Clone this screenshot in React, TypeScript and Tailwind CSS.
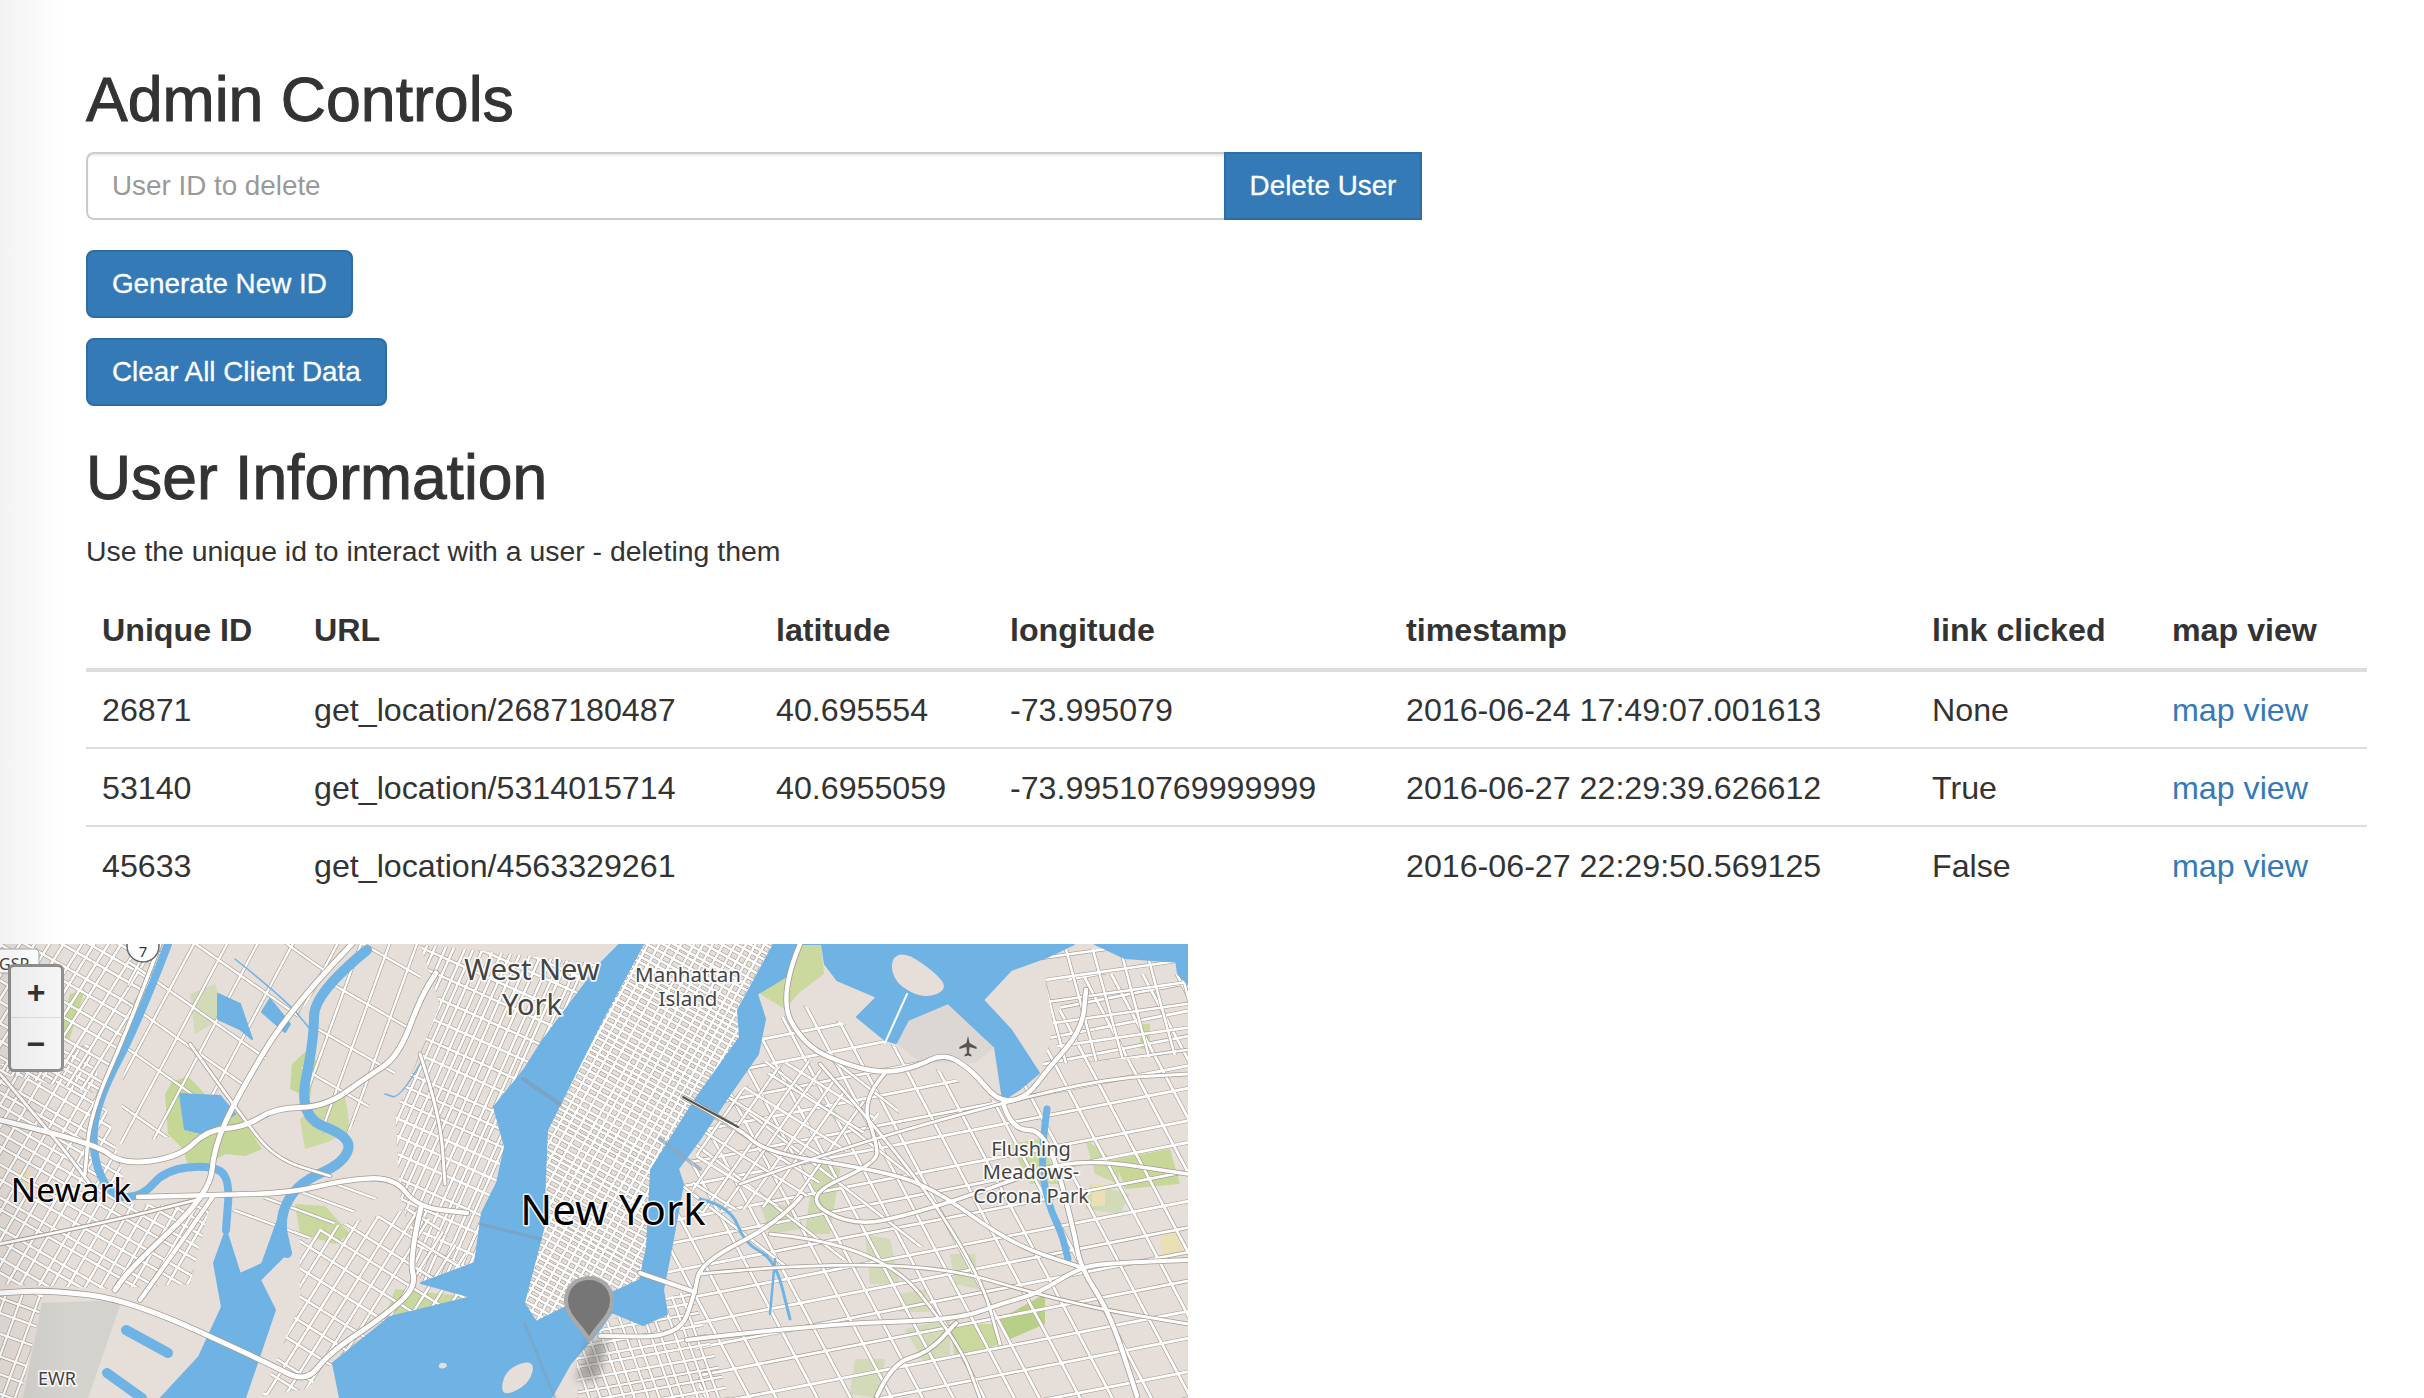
type Pt = [number, number];

// smooth a list of points into a path through the midpoints
function smooth(pts: Pt[], closed = false) {
  if (pts.length < 3) return "M" + pts.map((p) => p.join(" ")).join("L");
  const mid = (a: Pt, b: Pt): Pt => [(a[0] + b[0]) / 2, (a[1] + b[1]) / 2];
  if (closed) {
    const first = mid(pts[pts.length - 1], pts[0]);
    let d = `M${first[0]} ${first[1]}`;
    pts.forEach((p, i) => {
      const m = mid(p, pts[(i + 1) % pts.length]);
      d += `Q${p[0]} ${p[1]} ${m[0]} ${m[1]}`;
    });
    return d + "Z";
  }
  let d = `M${pts[0][0]} ${pts[0][1]}`;
  for (let i = 1; i < pts.length - 1; i++) {
    const m = mid(pts[i], pts[i + 1]);
    d += `Q${pts[i][0]} ${pts[i][1]} ${m[0]} ${m[1]}`;
  }
  const last = pts[pts.length - 1];
  return d + `L${last[0]} ${last[1]}`;
}

const poly = (pts: Pt[]) => pts.map((p) => p.join(",")).join(" ");

// little seeded random so the street grids come out the same each run
function rng(seed: number) {
  let s = seed;
  return () => {
    s = (s * 16807) % 2147483647;
    return s / 2147483647;
  };
}

function grid(box: number[], angle: number, gap: number, seed: number, jitter = 0.25) {
  const [x0, y0, x1, y1] = box;
  const cx = (x0 + x1) / 2;
  const cy = (y0 + y1) / 2;
  const r = Math.hypot(x1 - x0, y1 - y0) / 2 + 10;
  const a = (angle * Math.PI) / 180;
  const dx = Math.cos(a);
  const dy = Math.sin(a);
  const rand = rng(seed);
  let d = "";
  for (let o = -r; o <= r; o += gap * (1 - jitter + rand() * jitter * 2)) {
    const px = cx - dy * o;
    const py = cy + dx * o;
    const bend = (rand() - 0.5) * jitter * 8;
    d += `M${(px - dx * r).toFixed(1)} ${(py - dy * r).toFixed(1)}L${(px + dx * r + bend).toFixed(1)} ${(py + dy * r - bend).toFixed(1)}`;
  }
  return d;
}

type District = { id: string; clip: Pt[]; lines: { angle: number; gap: number }[]; width: number };

const manhattanShape: Pt[] = [[643, 0], [600, 80], [547, 186], [543, 286], [524, 359], [536, 378], [566, 363], [612, 349], [640, 336], [647, 303], [651, 226], [695, 156], [740, 93], [738, 66], [774, 3], [774, 0]];

const districts: District[] = [
  { id: "manhattan", clip: manhattanShape, lines: [{ angle: -61, gap: 10 }, { angle: 29, gap: 6.5 }], width: 2.6 },
  { id: "hudson", clip: [[420, 0], [600, 20], [543, 96], [524, 126], [494, 163], [505, 203], [497, 239], [482, 269], [475, 319], [421, 339], [400, 250], [395, 170], [440, 60]], lines: [{ angle: -66, gap: 9 }, { angle: 24, gap: 18 }], width: 2.6 },
  { id: "bayonne", clip: [[300, 290], [417, 263], [475, 319], [472, 353], [390, 373], [333, 419], [306, 445], [262, 452], [300, 360]], lines: [{ angle: -58, gap: 15 }, { angle: 32, gap: 20 }], width: 2.6 },
  { id: "newark", clip: [[0, 120], [90, 100], [130, 260], [210, 262], [190, 340], [110, 345], [0, 340]], lines: [{ angle: -60, gap: 14 }, { angle: 30, gap: 13 }], width: 2.6 },
  { id: "nnj", clip: [[0, 0], [168, 0], [100, 150], [0, 130]], lines: [{ angle: -58, gap: 13 }, { angle: 30, gap: 15 }], width: 2.6 },
  { id: "nnj2", clip: [[130, 0], [350, 0], [240, 150], [190, 190], [120, 200]], lines: [{ angle: -62, gap: 36 }, { angle: 35, gap: 44 }], width: 2.4 },
  { id: "meadow", clip: [[350, 0], [430, 0], [395, 130], [330, 210], [300, 130]], lines: [{ angle: -70, gap: 34 }, { angle: 30, gap: 50 }], width: 2.4 },
  { id: "kearny", clip: [[225, 270], [300, 240], [400, 240], [300, 300]], lines: [{ angle: 20, gap: 24 }], width: 2.4 },
  { id: "ewrside", clip: [[0, 345], [45, 345], [20, 454], [0, 454]], lines: [{ angle: -70, gap: 14 }, { angle: 20, gap: 18 }], width: 2.4 },
  { id: "queens", clip: [[745, 100], [800, 60], [890, 100], [1000, 160], [1040, 130], [1070, 30], [1188, 30], [1188, 454], [700, 454], [690, 350], [660, 340], [680, 240]], lines: [{ angle: -11, gap: 27 }, { angle: 62, gap: 30 }], width: 2.8 },
  { id: "queens2", clip: [[720, 120], [880, 110], [940, 300], [760, 330], [680, 250]], lines: [{ angle: 38, gap: 48 }], width: 2.6 },
  { id: "brooklyn", clip: [[575, 390], [690, 345], [730, 454], [578, 454]], lines: [{ angle: -10, gap: 11 }, { angle: 70, gap: 12 }], width: 2.4 },
  { id: "lic", clip: [[700, 170], [800, 110], [880, 170], [800, 260], [690, 270]], lines: [{ angle: -55, gap: 18 }, { angle: 32, gap: 20 }], width: 2.6 },
  { id: "northeast", clip: [[1040, 5], [1188, 5], [1188, 110], [1060, 120]], lines: [{ angle: -8, gap: 20 }, { angle: 75, gap: 24 }], width: 2.6 },
];

const highways: { pts: Pt[]; w: number }[] = [
  { pts: [[352, 0], [291, 63], [237, 153], [214, 203], [210, 249], [130, 325], [115, 346]], w: 5 },
  { pts: [[0, 176], [96, 199], [122, 221], [180, 213], [207, 186], [245, 183], [275, 164], [325, 163], [367, 133], [398, 113], [421, 53], [436, 29]], w: 5 },
  { pts: [[138, 253], [214, 251], [291, 249], [344, 236], [394, 233], [417, 263], [467, 269]], w: 4.5 },
  { pts: [[421, 263], [409, 316], [417, 343], [383, 373], [329, 409], [306, 439], [268, 419], [130, 356], [50, 346], [0, 349]], w: 5 },
  { pts: [[214, 251], [180, 300], [140, 356]], w: 4 },
  { pts: [[0, 130], [60, 200], [90, 240]], w: 3 },
  { pts: [[160, 0], [130, 80], [90, 170], [85, 230]], w: 3.5 },
  { pts: [[190, 100], [240, 170], [275, 215], [330, 232]], w: 2.8 },
  { pts: [[420, 110], [440, 170], [445, 240]], w: 3 },
  { pts: [[0, 300], [100, 280], [200, 255]], w: 2.8 },
  { pts: [[800, 0], [778, 53], [805, 103], [853, 123], [885, 129], [916, 123], [944, 109], [972, 126], [999, 159], [1027, 153], [1047, 126], [1082, 86], [1086, 46]], w: 4.5 },
  { pts: [[683, 153], [738, 183], [766, 209], [877, 226], [932, 243], [1011, 300], [1080, 323]], w: 3.5 },
  { pts: [[1003, 159], [1011, 186], [1047, 186], [1074, 286], [1080, 323], [1110, 369], [1137, 452]], w: 4.5 },
  { pts: [[885, 129], [861, 156], [877, 199], [877, 219], [801, 253], [853, 283], [916, 269], [995, 243], [1074, 213], [1188, 230]], w: 3.5 },
  { pts: [[801, 253], [778, 279], [700, 319], [695, 349], [679, 393], [600, 392]], w: 4 },
  { pts: [[640, 329], [695, 348]], w: 4 },
  { pts: [[687, 396], [820, 380], [956, 376], [1003, 359], [1039, 349], [1080, 323], [1114, 319], [1188, 316]], w: 4 },
  { pts: [[877, 452], [892, 419], [928, 409], [956, 379]], w: 4 },
  { pts: [[740, 240], [830, 208], [960, 170], [1100, 135], [1188, 130]], w: 2.8 },
  { pts: [[700, 330], [900, 310], [1070, 360], [1188, 380]], w: 2.8 },
  { pts: [[770, 290], [880, 300], [960, 400], [980, 454]], w: 2.8 },
  { pts: [[820, 120], [905, 215], [980, 330], [1000, 400]], w: 2.8 },
];

const parks: { pts: Pt[]; c: string }[] = [
  { pts: [[165, 150], [172, 138], [188, 132], [205, 150], [240, 170], [252, 190], [262, 205], [245, 212], [225, 210], [205, 222], [190, 228], [183, 205], [168, 190]], c: "#c4d797" },
  { pts: [[300, 175], [322, 158], [345, 150], [350, 186], [328, 198], [305, 205]], c: "#ccd9a2" },
  { pts: [[292, 120], [305, 108], [320, 120], [312, 140], [310, 155], [290, 145]], c: "#c4d797" },
  { pts: [[190, 50], [215, 40], [222, 62], [230, 70], [208, 82], [195, 90]], c: "#d2dab8" },
  { pts: [[295, 260], [325, 262], [350, 290], [335, 300], [300, 290]], c: "#c9d89d" },
  { pts: [[395, 345], [472, 353], [455, 372], [430, 385], [405, 400], [385, 375]], c: "#c9d89d" },
  { pts: [[70, 50], [85, 45], [68, 100], [58, 90]], c: "#c4d797" },
  { pts: [[340, 410], [375, 385], [385, 395], [345, 430]], c: "#c9d89d" },
  { pts: [[786, 0], [821, 0], [824, 30], [800, 48], [785, 65], [760, 50], [770, 20]], c: "#cbd99f" },
  { pts: [[815, 215], [840, 225], [830, 290], [805, 290]], c: "#ced8ae" },
  { pts: [[760, 260], [790, 262], [800, 285], [770, 290]], c: "#cfd8b4" },
  { pts: [[1010, 200], [1040, 195], [1060, 240], [1030, 240]], c: "#cbd9a2" },
  { pts: [[1085, 195], [1120, 220], [1118, 240], [1095, 230]], c: "#cbd9a2" },
  { pts: [[1115, 215], [1170, 205], [1180, 240], [1125, 245]], c: "#c7d798" },
  { pts: [[1090, 240], [1130, 250], [1120, 270], [1085, 265]], c: "#d2dab8" },
  { pts: [[1000, 375], [1045, 350], [1045, 380], [1010, 395]], c: "#b9cf87" },
  { pts: [[950, 380], [995, 380], [1000, 400], [955, 415]], c: "#c9d89d" },
  { pts: [[905, 385], [950, 375], [950, 410], [925, 420]], c: "#d2dab8" },
  { pts: [[855, 415], [885, 415], [880, 454], [850, 450]], c: "#d2dab8" },
  { pts: [[865, 290], [890, 295], [900, 340], [870, 340]], c: "#d2dab8" },
  { pts: [[950, 310], [975, 310], [978, 345], [955, 340]], c: "#d2dab8" },
  { pts: [[900, 350], [925, 345], [930, 368], [900, 368]], c: "#d2dab8" },
  { pts: [[1092, 240], [1105, 240], [1105, 262], [1092, 262]], c: "#eadfb5" },
  { pts: [[1160, 290], [1180, 285], [1183, 312], [1162, 315]], c: "#eadfb5" },
  { pts: [[1140, 80], [1150, 80], [1150, 105], [1140, 105]], c: "#c9d89d" },
  { pts: [[20, 225], [30, 225], [32, 245], [18, 245]], c: "#eadfb5" },
];

const waterAreas: Pt[][] = [
  // hudson, upper bay and east river
  [[620, 0], [600, 20], [543, 96], [524, 126], [494, 163], [505, 203], [497, 239], [482, 269], [475, 319], [421, 339], [472, 353], [390, 373], [333, 419], [340, 454], [551, 454], [570, 420], [600, 385], [612, 368], [643, 381], [667, 370], [663, 346], [672, 300], [683, 240], [678, 225], [700, 195], [730, 150], [758, 110], [765, 75], [757, 50], [790, 30], [800, 0], [774, 0], [738, 66], [740, 93], [695, 156], [651, 226], [647, 303], [640, 336], [612, 349], [566, 363], [536, 378], [524, 359], [543, 286], [547, 186], [600, 80], [643, 0]],
  // north of queens
  [[800, 0], [1074, 0], [1047, 13], [1011, 26], [983, 56], [1011, 86], [1039, 129], [1020, 145], [1003, 156], [995, 103], [948, 59], [908, 76], [896, 99], [885, 96], [857, 73], [877, 53], [837, 36], [825, 20], [822, 0]],
  // newark bay
  [[226, 286], [214, 319], [222, 363], [199, 413], [161, 454], [245, 454], [275, 366], [260, 336], [287, 309], [279, 273], [262, 320], [240, 330]],
  // meadowlands pond
  [[180, 150], [220, 152], [235, 170], [205, 190], [185, 185]],
  [[218, 50], [240, 60], [252, 95], [240, 85], [218, 75]],
  [[270, 55], [290, 80], [285, 88], [262, 68]],
  // top right corner
  [[1095, 0], [1188, 0], [1180, 18], [1125, 14]],
  [[1174, 0], [1188, 0], [1188, 40], [1178, 30]],
];

const landInWater: Pt[][] = [
  // rikers
  [[890, 15], [905, 8], [935, 28], [948, 45], [925, 55], [895, 40]],
  // liberty bay bits
  [[505, 425], [535, 415], [530, 440], [500, 454]],
  [[440, 418], [448, 420], [445, 425], [438, 424]],
];

const rivers: { pts: Pt[]; w: number }[] = [
  { pts: [[168, 0], [138, 79], [96, 159], [92, 213], [111, 253], [142, 253], [165, 226], [210, 221], [230, 233], [226, 286]], w: 8 },
  { pts: [[367, 6], [314, 49], [314, 96], [298, 173], [352, 193], [344, 219], [298, 239], [279, 273], [287, 309]], w: 10 },
  { pts: [[420, 120], [400, 155], [385, 150]], w: 1.5 },
  { pts: [[235, 15], [285, 55], [310, 85]], w: 1.5 },
  { pts: [[700, 255], [730, 262], [745, 300], [775, 315], [790, 375]], w: 3 },
  { pts: [[775, 315], [770, 370]], w: 2.5 },
  { pts: [[1047, 165], [1040, 215], [1048, 260], [1062, 290], [1068, 315]], w: 7 },
  { pts: [[126, 386], [168, 409]], w: 10 },
  { pts: [[107, 429], [142, 454]], w: 10 },
];

const streetClips = districts.map((d) => ({
  ...d,
  paths: d.lines.map((l, i) => {
    const xs = d.clip.map((p) => p[0]);
    const ys = d.clip.map((p) => p[1]);
    return grid([Math.min(...xs), Math.min(...ys), Math.max(...xs), Math.max(...ys)], l.angle, l.gap, 97 + i * 31 + d.id.length * 17);
  }),
}));

const road = "#a49c92";

function Label({ x, y, size, children, black }: { x: number; y: number; size: number; children: string; black?: boolean }) {
  return (
    <text
      x={x}
      y={y}
      fontSize={size}
      textAnchor="middle"
      fontFamily="'Noto Sans', 'Open Sans', sans-serif"
      fill={black ? "#000" : "#444"}
      stroke="#fff"
      strokeOpacity={0.85}
      strokeWidth={black ? 3 : 3.5}
      paintOrder="stroke"
      strokeLinejoin="round"
    >
      {children}
    </text>
  );
}

function CityMap() {
  return (
    <svg viewBox="0 0 1188 454" className="block h-[454px] w-[1188px] bg-[#e6ded8]">
      <defs>
        {streetClips.map((d) => (
          <clipPath key={d.id} id={"clip-" + d.id}>
            <polygon points={poly(d.clip)} />
          </clipPath>
        ))}
        <filter id="pin-shadow" x="-50%" y="-50%" width="200%" height="200%">
          <feGaussianBlur stdDeviation="4" />
        </filter>
      </defs>

      {parks.map((p, i) => (
        <polygon key={i} points={poly(p.pts)} fill={p.c} />
      ))}
      <polygon points={poly([[896, 99], [908, 76], [948, 59], [995, 103], [975, 119], [920, 118]])} fill="#dcd7d3" />
      <polygon points={poly([[42, 359], [122, 356], [88, 454], [23, 454]])} fill="#d4d2cd" />

      {streetClips.map((d) => (
        <g key={d.id} clipPath={`url(#clip-${d.id})`} fill="none">
          {d.paths.map((p, i) => (
            <path key={i} d={p} stroke={road} strokeWidth={d.width + 1.2} />
          ))}
          {d.paths.map((p, i) => (
            <path key={i} d={p} stroke="#fff" strokeWidth={d.width} />
          ))}
        </g>
      ))}

      {/* the big water bodies keep their corners, smoothing rounds the shores off too far */}
      {waterAreas.map((w, i) => (
        <polygon key={i} points={poly(w)} fill="#6fb2e4" strokeLinejoin="round" stroke="#6fb2e4" strokeWidth="2" />
      ))}
      {landInWater.map((w, i) => (
        <path key={i} d={smooth(w, true)} fill="#e6ded8" />
      ))}
      {rivers.map((r, i) => (
        <path key={i} d={smooth(r.pts)} fill="none" stroke="#6fb2e4" strokeWidth={r.w} strokeLinecap="round" />
      ))}

      <g fill="none" strokeLinecap="round" strokeLinejoin="round">
        {highways.map((h, i) => (
          <path key={i} d={smooth(h.pts)} stroke={road} strokeWidth={h.w + 1.6} />
        ))}
        {highways.map((h, i) => (
          <path key={i} d={smooth(h.pts)} stroke="#fff" strokeWidth={h.w} />
        ))}
        {/* tunnels and bridges over the rivers */}
        <path d="M683 153L738 183" stroke="#555" strokeWidth="2" />
        <path d="M660 195L700 225" stroke="#8fa7bb" strokeWidth="4" opacity="0.7" />
        <path d="M523 135L560 160" stroke="#7f9db6" strokeWidth="4" opacity="0.7" />
        <path d="M480 280L540 295" stroke="#7f9db6" strokeWidth="3" opacity="0.7" />
        <path d="M525 380Q545 430 555 454" stroke="#7f9db6" strokeWidth="3" opacity="0.5" />
        <path d="M885 99L907 50" stroke="#fff" strokeWidth="2" />
      </g>

      {/* route shields */}
      <rect x="-8" y="5" width="47" height="24" rx="4" fill="#fff" stroke="#aaa" />
      <text x="-1" y="26" fontSize="16" fill="#444" fontFamily="'Noto Sans', sans-serif">GSP</text>
      <ellipse cx="143" cy="2" rx="16" ry="16" fill="#fff" stroke="#666" strokeWidth="1.5" />
      <text x="143" y="13" fontSize="15" textAnchor="middle" fill="#333" fontFamily="'Noto Sans', sans-serif">7</text>

      {/* la guardia plane */}
      <path d="M968 92l1.6 7 7 4v2l-7-2-.6 6 2.5 2v1.5l-3.5-1-3.500 1V111l2.500-2-.6-6-7 2v-2l7-4z" fill="#555" />

      <Label x={532} y={36} size={29}>West New</Label>
      <Label x={532} y={71} size={29}>York</Label>
      <Label x={688} y={38} size={20.5}>Manhattan</Label>
      <Label x={688} y={62} size={20.5}>Island</Label>
      <Label x={71} y={258} size={33.5} black>Newark</Label>
      <Label x={613} y={281} size={42} black>New York</Label>
      <Label x={1031} y={212} size={20}>Flushing</Label>
      <Label x={1031} y={235} size={20}>Meadows-</Label>
      <Label x={1031} y={259} size={20}>Corona Park</Label>
      <Label x={57} y={441} size={18}>EWR</Label>

      {/* grey pin with its shadow */}
      <path d="M590 396l-14 40h22l10-40z" fill="#555" opacity="0.45" filter="url(#pin-shadow)" />
      <path
        d="M589 396C581 381 566 372 566 357C566 343 576 334 589 334C602 334 612 343 612 357C612 372 597 381 589 396Z"
        fill="#767676"
        stroke="#a9a9a9"
        strokeWidth="4"
      />
    </svg>
  );
}

const rows = [
  ["26871", "get_location/2687180487", "40.695554", "-73.995079", "2016-06-24 17:49:07.001613", "None"],
  ["53140", "get_location/5314015714", "40.6955059", "-73.99510769999999", "2016-06-27 22:29:39.626612", "True"],
  ["45633", "get_location/4563329261", "", "", "2016-06-27 22:29:50.569125", "False"],
];

const heads = ["Unique ID", "URL", "latitude", "longitude", "timestamp", "link clicked", "map view"];

export default function App() {
  return (
    <div className="relative h-[1398px] overflow-hidden bg-white font-['Liberation_Sans',Arial,sans-serif] text-[#333]">
      <div className="pointer-events-none absolute inset-y-0 left-0 z-10 w-[64px] bg-gradient-to-r from-black/5 to-transparent" />

      <div className="pl-[86px] pr-[57px] pt-[66px]">
        <h2 className="text-[62.6px] leading-[66px] [-webkit-text-stroke:1px_#333]">Admin Controls</h2>

        <div className="mt-[20px] flex h-[68px] w-[1336px]">
          <input
            placeholder="User ID to delete"
            className="min-w-0 flex-1 rounded-l-[8px] border-2 border-r-0 border-[#ccc] bg-white px-[24px] text-[27.8px] shadow-[inset_0_2px_2px_rgba(0,0,0,0.075)] outline-none placeholder:text-[#999]"
          />
          <button className="w-[198px] border-2 border-[#2e6da4] bg-[#337ab7] text-[27.8px] text-white [-webkit-text-stroke:0.3px_#fff]">Delete User</button>
        </div>

        <div className="mt-[30px] flex flex-col items-start gap-[20px]">
          <button className="h-[68px] rounded-[8px] border-2 border-[#2e6da4] bg-[#337ab7] px-[24px] text-[27.8px] text-white [-webkit-text-stroke:0.3px_#fff]">Generate New ID</button>
          <button className="h-[68px] rounded-[8px] border-2 border-[#2e6da4] bg-[#337ab7] px-[24px] text-[27.8px] text-white [-webkit-text-stroke:0.3px_#fff]">Clear All Client Data</button>
        </div>

        <h2 className="mt-[39px] text-[62.4px] leading-[66px] [-webkit-text-stroke:1px_#333]">User Information</h2>
        <p className="mt-[20px] text-[28.4px] leading-[40px]">Use the unique id to interact with a user - deleting them</p>

        <table className="mt-[21px] w-[2281px] table-fixed border-collapse text-[32.2px]">
          <colgroup>
            <col className="w-[212px]" />
            <col className="w-[462px]" />
            <col className="w-[234px]" />
            <col className="w-[396px]" />
            <col className="w-[526px]" />
            <col className="w-[240px]" />
            <col className="w-[211px]" />
          </colgroup>
          <thead>
            <tr className="h-[78px] border-b-4 border-[#ddd]">
              {heads.map((h) => (
                <th key={h} className="px-[16px] text-left font-bold whitespace-nowrap">{h}</th>
              ))}
            </tr>
          </thead>
          <tbody>
            {rows.map((r, i) => (
              <tr key={r[0]} className={"h-[78px] " + (i < 2 ? "border-b-2 border-[#ddd]" : "")}>
                {r.map((c, j) => (
                  <td key={j} className="px-[16px] pt-[2px] whitespace-nowrap">{c}</td>
                ))}
                <td className="px-[16px] pt-[2px] whitespace-nowrap">
                  <a href="#" className="text-[#337ab7]">map view</a>
                </td>
              </tr>
            ))}
          </tbody>
        </table>
      </div>

      <div className="absolute bottom-0 left-0 h-[454px] w-[1188px] overflow-hidden">
        <CityMap />
        <div className="absolute left-[8px] top-[20px] flex w-[56px] flex-col overflow-hidden rounded-[6px] border-[3px] border-[#8f8f8f] bg-[#f6f6f6] font-bold text-[#333]">
          <div className="flex h-[51px] items-center justify-center border-b border-[#ddd] text-[32px] leading-none">+</div>
          <div className="flex h-[51px] items-center justify-center text-[32px] leading-none">−</div>
        </div>
      </div>
    </div>
  );
}
